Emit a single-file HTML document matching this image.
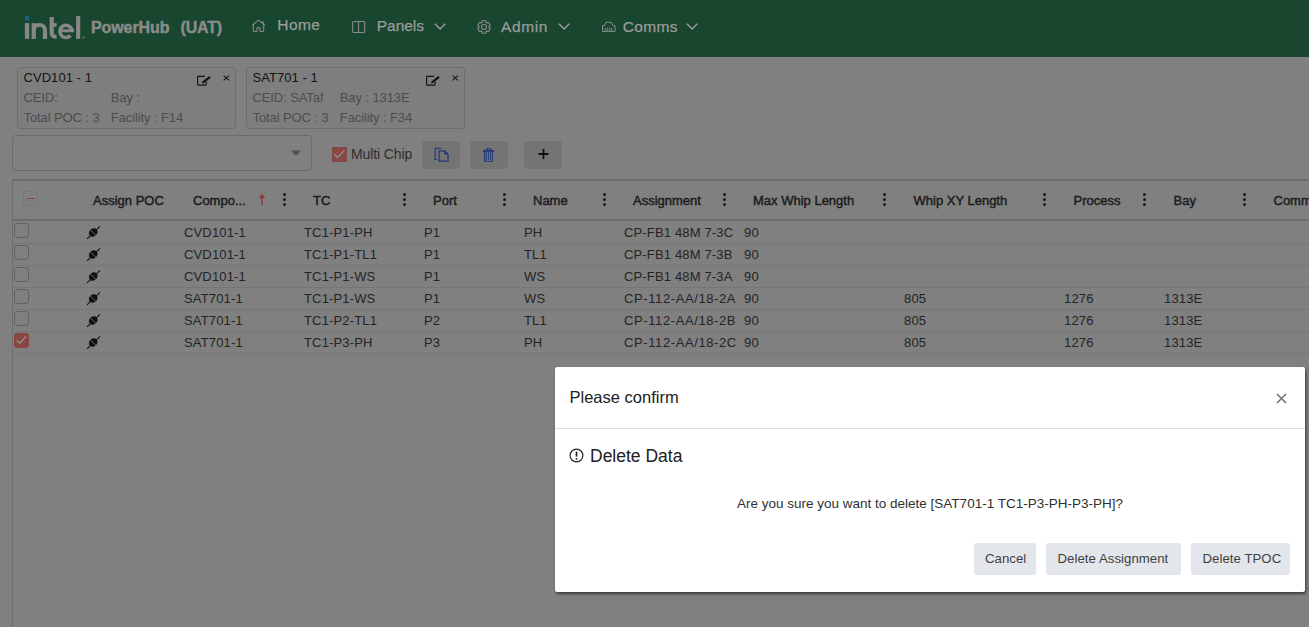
<!DOCTYPE html>
<html><head><meta charset="utf-8">
<style>
*{box-sizing:border-box;margin:0;padding:0}
html,body{width:1309px;height:627px;overflow:hidden;background:#808080;font-family:"Liberation Sans",sans-serif;position:relative}
.a{position:absolute;white-space:nowrap}
svg.a{overflow:visible}
</style></head><body>
<div style="position:absolute;left:0;top:0;width:1309px;height:57px;background:rgb(24,70,46)"></div>
<svg class="a" style="left:0;top:0" width="90" height="45" viewBox="0 0 90 45"><rect x="24.9" y="16.1" width="4.3" height="4.6" fill="#17607f"/><rect x="24.9" y="23.1" width="4.3" height="15.8" fill="#878787"/><path d="M33.75 38.9 V23.1" fill="none" stroke="#878787" stroke-width="4.3"/><path d="M33.75 31 C33.75 26.5 36.2 24.9 39.3 24.9 C43.2 24.9 45 27.3 45 31 V38.9" fill="none" stroke="#878787" stroke-width="3.8"/><path d="M45 31 V38.9" stroke="#878787" stroke-width="4.3"/><path d="M51.7 17 V32.5 C51.7 36 53 36.8 56.6 36.8" fill="none" stroke="#878787" stroke-width="4.2"/><rect x="51" y="23.1" width="5.6" height="3.7" fill="#878787"/><path d="M60.05 30.8 H73.9" stroke="#878787" stroke-width="3"/><path d="M72.05 31.5 A6.1 6.1 0 1 0 70.5 35.5" fill="none" stroke="#878787" stroke-width="3.6"/><rect x="76.1" y="16.1" width="4.1" height="22.8" fill="#878787"/><circle cx="83.6" cy="37.4" r="1.2" fill="#5f6f66"/></svg>
<div class="a" style="left:91px;top:20.36px;font-size:16px;line-height:16px;color:#8b8b8b;font-weight:bold;letter-spacing:-0.1px;-webkit-text-stroke:0.45px #8b8b8b;">PowerHub</div>
<div class="a" style="left:180.5px;top:20.36px;font-size:16px;line-height:16px;color:#8b8b8b;font-weight:bold;letter-spacing:-0.2px;-webkit-text-stroke:0.45px #8b8b8b;">(UAT)</div>
<div class="a" style="left:277.3px;top:17.48px;font-size:15.5px;line-height:15.5px;color:#9c9c9c;font-weight:normal;letter-spacing:0.4px;-webkit-text-stroke:0.25px #9c9c9c;">Home</div>
<div class="a" style="left:376.8px;top:18.48px;font-size:15.5px;line-height:15.5px;color:#9c9c9c;font-weight:normal;letter-spacing:-0.05px;-webkit-text-stroke:0.25px #9c9c9c;">Panels</div>
<div class="a" style="left:501px;top:18.68px;font-size:15.5px;line-height:15.5px;color:#9c9c9c;font-weight:normal;letter-spacing:0.6px;-webkit-text-stroke:0.25px #9c9c9c;">Admin</div>
<div class="a" style="left:622.8px;top:18.68px;font-size:15.5px;line-height:15.5px;color:#9c9c9c;font-weight:normal;letter-spacing:0.35px;-webkit-text-stroke:0.25px #9c9c9c;">Comms</div>
<svg class="a" style="left:251px;top:19px" width="15" height="14" viewBox="0 0 15 14"><path d="M1.5 6 L7.5 1.2 L13.5 6 M12.2 4.9 V2.6 M2.3 5.6 V11.2 Q2.3 12.4 3.5 12.4 H5.3 Q6 12.4 6 11.7 V8.7 H9 V11.7 Q9 12.4 9.7 12.4 H11.5 Q12.7 12.4 12.7 11.2 V5.6" fill="none" stroke="#8d8d8d" stroke-width="1.05" stroke-linejoin="round" stroke-linecap="round"/></svg>
<svg class="a" style="left:351px;top:20px" width="15" height="14" viewBox="0 0 15 14"><rect x="1.7" y="1.5" width="12" height="11" rx="1.1" fill="none" stroke="#8d8d8d" stroke-width="1.05"/><path d="M7.6 1.5 V12.5" stroke="#8d8d8d" stroke-width="1.05"/></svg>
<svg class="a" style="left:477px;top:20px" width="14" height="14" viewBox="0 0 13 13"><path d="M4.62 2.30 L4.73 0.77 L8.27 0.77 L8.38 2.30 L9.20 2.78 L10.58 2.10 L12.35 5.17 L11.08 6.02 L11.08 6.98 L12.35 7.83 L10.58 10.90 L9.20 10.22 L8.38 10.70 L8.27 12.23 L4.73 12.23 L4.62 10.70 L3.80 10.22 L2.42 10.90 L0.65 7.83 L1.92 6.98 L1.92 6.02 L0.65 5.17 L2.42 2.10 L3.80 2.78 Z" fill="none" stroke="#8d8d8d" stroke-width="1.0" stroke-linejoin="round"/><circle cx="6.5" cy="6.5" r="2.3" fill="none" stroke="#8d8d8d" stroke-width="1.0"/></svg>
<svg class="a" style="left:601px;top:21px" width="16" height="12" viewBox="0 0 16 12"><path d="M1.5 10.4 V4.6 H3.5 L5 1.3 H10.5 L12 4.6 H14 V10.4 Z" fill="none" stroke="#8d8d8d" stroke-width="1.0" stroke-linejoin="round"/><path d="M4.1 6.6 V10.2 M6.2 6.6 V10.2 M8.3 6.6 V10.2 M10.5 6.6 V10.2" stroke="#8d8d8d" stroke-width="0.9"/></svg>
<svg class="a" style="left:434px;top:22px" width="13" height="9" viewBox="0 0 13 9"><path d="M0.9 1.7 L6.1 7 L11.3 1.7" fill="none" stroke="#9a9a9a" stroke-width="1.5"/></svg>
<svg class="a" style="left:558px;top:22px" width="13" height="9" viewBox="0 0 13 9"><path d="M0.9 1.7 L6.1 7 L11.3 1.7" fill="none" stroke="#9a9a9a" stroke-width="1.5"/></svg>
<svg class="a" style="left:686px;top:22px" width="13" height="9" viewBox="0 0 13 9"><path d="M0.9 1.7 L6.1 7 L11.3 1.7" fill="none" stroke="#9a9a9a" stroke-width="1.5"/></svg>
<div class="a" style="left:17px;top:67px;width:219px;height:62px;border:1px solid #6e6e6e;border-radius:3px;background:#7e7e7e"></div>
<div class="a" style="left:23.5px;top:71.00px;font-size:13px;line-height:13px;color:#131313;font-weight:normal;letter-spacing:0.05px;">CVD101 - 1</div>
<div class="a" style="left:23.5px;top:91.00px;font-size:13px;line-height:13px;color:#4d4d4d;font-weight:normal;letter-spacing:-0.1px;">CEID:</div>
<div class="a" style="left:110.8px;top:91.00px;font-size:13px;line-height:13px;color:#4d4d4d;font-weight:normal;letter-spacing:-0.1px;">Bay :</div>
<div class="a" style="left:23.5px;top:111.00px;font-size:13px;line-height:13px;color:#4d4d4d;font-weight:normal;letter-spacing:-0.1px;">Total POC : 3</div>
<div class="a" style="left:110.8px;top:111.00px;font-size:13px;line-height:13px;color:#4d4d4d;font-weight:normal;letter-spacing:-0.1px;">Facility : F14</div>
<svg class="a" style="left:196px;top:75px" width="16" height="12" viewBox="0 0 16 12"><path d="M9 1.4 H2.1 Q1.6 1.4 1.6 1.9 V9.6 Q1.6 10.1 2.1 10.1 H9.7 Q10.2 10.1 10.2 9.6 V6.8" fill="none" stroke="#121212" stroke-width="1.1"/><path d="M5.9 8.4 L6.77 6.29 L13.31 1.04 L14.69 2.76 L8.15 8.01 Z" fill="#121212"/></svg>
<svg class="a" style="left:223px;top:74.5px" width="7" height="6" viewBox="0 0 7 6"><path d="M0.6 0.6 L6 5.4 M6 0.6 L0.6 5.4" stroke="#151515" stroke-width="1.05"/></svg>
<div class="a" style="left:246px;top:67px;width:219px;height:62px;border:1px solid #6e6e6e;border-radius:3px;background:#7e7e7e"></div>
<div class="a" style="left:252.5px;top:71.00px;font-size:13px;line-height:13px;color:#131313;font-weight:normal;letter-spacing:0.05px;">SAT701 - 1</div>
<div class="a" style="left:252.5px;top:91.00px;font-size:13px;line-height:13px;color:#4d4d4d;font-weight:normal;letter-spacing:-0.1px;">CEID: SATaf</div>
<div class="a" style="left:339.8px;top:91.00px;font-size:13px;line-height:13px;color:#4d4d4d;font-weight:normal;letter-spacing:-0.1px;">Bay : 1313E</div>
<div class="a" style="left:252.5px;top:111.00px;font-size:13px;line-height:13px;color:#4d4d4d;font-weight:normal;letter-spacing:-0.1px;">Total POC : 3</div>
<div class="a" style="left:339.8px;top:111.00px;font-size:13px;line-height:13px;color:#4d4d4d;font-weight:normal;letter-spacing:-0.1px;">Facility : F34</div>
<svg class="a" style="left:425px;top:75px" width="16" height="12" viewBox="0 0 16 12"><path d="M9 1.4 H2.1 Q1.6 1.4 1.6 1.9 V9.6 Q1.6 10.1 2.1 10.1 H9.7 Q10.2 10.1 10.2 9.6 V6.8" fill="none" stroke="#121212" stroke-width="1.1"/><path d="M5.9 8.4 L6.77 6.29 L13.31 1.04 L14.69 2.76 L8.15 8.01 Z" fill="#121212"/></svg>
<svg class="a" style="left:452px;top:74.5px" width="7" height="6" viewBox="0 0 7 6"><path d="M0.6 0.6 L6 5.4 M6 0.6 L0.6 5.4" stroke="#151515" stroke-width="1.05"/></svg>
<div class="a" style="left:12px;top:135px;width:300px;height:36px;border:1px solid #6a6a6a;border-radius:4px;background:#808080"></div>
<svg class="a" style="left:290px;top:149.8px" width="12" height="7" viewBox="0 0 12 7"><path d="M1 0.5 H11 L6 6 Z" fill="#505050"/></svg>
<div class="a" style="left:332px;top:147px;width:15px;height:15px;background:#8a4641;border:1px solid #7d4a46"></div>
<svg class="a" style="left:332px;top:147px" width="15" height="15" viewBox="0 0 15 15"><path d="M2.3 7.4 L5.6 10.4 L12.3 3.5" fill="none" stroke="#8c8c8c" stroke-width="1.5"/></svg>
<div class="a" style="left:351px;top:147.15px;font-size:14px;line-height:14px;color:#2e2e2e;font-weight:normal;letter-spacing:-0.1px;">Multi Chip</div>
<div class="a" style="left:422px;top:141px;width:38px;height:28px;border-radius:3px;background:#747474"></div>
<div class="a" style="left:470px;top:141px;width:38px;height:28px;border-radius:3px;background:#747474"></div>
<div class="a" style="left:524px;top:141px;width:38px;height:28px;border-radius:3px;background:#747474"></div>
<svg class="a" style="left:428px;top:143px" width="72" height="24" viewBox="0 0 72 24"><path d="M13.75 5.3 H7.1 V16.5 H9" fill="none" stroke="#1f3575" stroke-width="1.1"/><path d="M11.1 7.8 H16.5 L20 11.3 V18.1 H11.1 Z" fill="none" stroke="#1f3575" stroke-width="1.2" stroke-linejoin="miter"/><path d="M16.3 7.3 L20.5 11.5 H16.3 Z" fill="#1f3575"/><rect x="55" y="6.9" width="11" height="1.9" fill="#1f3575"/><path d="M58.8 7 V5.6 H62.6 V7" fill="none" stroke="#1f3575" stroke-width="1"/><path d="M56.6 8.8 V18.2 H64.4 V8.8" fill="none" stroke="#1f3575" stroke-width="1.1"/><path d="M58.4 9 V16.8 M60.5 9 V16.8 M62.5 9 V16.8" stroke="#1f3575" stroke-width="0.9"/></svg>
<svg class="a" style="left:538px;top:148px" width="11" height="12" viewBox="0 0 11 12"><path d="M0.5 6 H10.5 M5.5 1 V11" stroke="#111" stroke-width="1.8"/></svg>
<div class="a" style="left:12px;top:179.3px;width:1297px;height:1.8px;background:#6b6b6b"></div>
<div class="a" style="left:12px;top:179px;width:1px;height:448px;background:#6e6e6e"></div>
<div class="a" style="left:12px;top:219px;width:1297px;height:2px;background:#6c6c6c"></div>
<div class="a" style="left:23px;top:191px;width:15px;height:15px;border:1px solid #777;border-radius:3px"></div>
<div class="a" style="left:27px;top:197.5px;width:8px;height:1.5px;background:#8a4844"></div>
<div class="a" style="left:93px;top:194.00px;font-size:13px;line-height:13px;color:#1c1c1c;font-weight:normal;-webkit-text-stroke:0.45px #1c1c1c;">Assign POC</div>
<div class="a" style="left:193px;top:194.00px;font-size:13px;line-height:13px;color:#1c1c1c;font-weight:normal;-webkit-text-stroke:0.45px #1c1c1c;">Compo...</div>
<div class="a" style="left:313px;top:194.00px;font-size:13px;line-height:13px;color:#1c1c1c;font-weight:normal;-webkit-text-stroke:0.45px #1c1c1c;">TC</div>
<div class="a" style="left:433px;top:194.00px;font-size:13px;line-height:13px;color:#1c1c1c;font-weight:normal;-webkit-text-stroke:0.45px #1c1c1c;">Port</div>
<div class="a" style="left:533px;top:194.00px;font-size:13px;line-height:13px;color:#1c1c1c;font-weight:normal;-webkit-text-stroke:0.45px #1c1c1c;">Name</div>
<div class="a" style="left:633px;top:194.00px;font-size:13px;line-height:13px;color:#1c1c1c;font-weight:normal;-webkit-text-stroke:0.45px #1c1c1c;">Assignment</div>
<div class="a" style="left:753px;top:194.00px;font-size:13px;line-height:13px;color:#1c1c1c;font-weight:normal;-webkit-text-stroke:0.45px #1c1c1c;">Max Whip Length</div>
<div class="a" style="left:913.5px;top:194.00px;font-size:13px;line-height:13px;color:#1c1c1c;font-weight:normal;-webkit-text-stroke:0.45px #1c1c1c;">Whip XY Length</div>
<div class="a" style="left:1073.5px;top:194.00px;font-size:13px;line-height:13px;color:#1c1c1c;font-weight:normal;-webkit-text-stroke:0.45px #1c1c1c;">Process</div>
<div class="a" style="left:1173.5px;top:194.00px;font-size:13px;line-height:13px;color:#1c1c1c;font-weight:normal;-webkit-text-stroke:0.45px #1c1c1c;">Bay</div>
<div class="a" style="left:1273.5px;top:194.00px;font-size:13px;line-height:13px;color:#1c1c1c;font-weight:normal;-webkit-text-stroke:0.45px #1c1c1c;">Comm</div>
<svg class="a" style="left:250px;top:188px" width="20" height="20" viewBox="0 0 20 20"><path d="M8.7 10.1 L12 5.8 L15.3 10.1 Z" fill="#8f3b37"/><rect x="11.2" y="9.9" width="1.65" height="6.9" fill="#8f3b37"/></svg>
<div class="a" style="left:282.75px;top:192.6px;width:3.4px;height:3.4px;border-radius:50%;background:#1c1c1c"></div>
<div class="a" style="left:282.75px;top:197.7px;width:3.4px;height:3.4px;border-radius:50%;background:#1c1c1c"></div>
<div class="a" style="left:282.75px;top:202.79999999999998px;width:3.4px;height:3.4px;border-radius:50%;background:#1c1c1c"></div>
<div class="a" style="left:402.75px;top:192.6px;width:3.4px;height:3.4px;border-radius:50%;background:#1c1c1c"></div>
<div class="a" style="left:402.75px;top:197.7px;width:3.4px;height:3.4px;border-radius:50%;background:#1c1c1c"></div>
<div class="a" style="left:402.75px;top:202.79999999999998px;width:3.4px;height:3.4px;border-radius:50%;background:#1c1c1c"></div>
<div class="a" style="left:502.75px;top:192.6px;width:3.4px;height:3.4px;border-radius:50%;background:#1c1c1c"></div>
<div class="a" style="left:502.75px;top:197.7px;width:3.4px;height:3.4px;border-radius:50%;background:#1c1c1c"></div>
<div class="a" style="left:502.75px;top:202.79999999999998px;width:3.4px;height:3.4px;border-radius:50%;background:#1c1c1c"></div>
<div class="a" style="left:602.75px;top:192.6px;width:3.4px;height:3.4px;border-radius:50%;background:#1c1c1c"></div>
<div class="a" style="left:602.75px;top:197.7px;width:3.4px;height:3.4px;border-radius:50%;background:#1c1c1c"></div>
<div class="a" style="left:602.75px;top:202.79999999999998px;width:3.4px;height:3.4px;border-radius:50%;background:#1c1c1c"></div>
<div class="a" style="left:722.75px;top:192.6px;width:3.4px;height:3.4px;border-radius:50%;background:#1c1c1c"></div>
<div class="a" style="left:722.75px;top:197.7px;width:3.4px;height:3.4px;border-radius:50%;background:#1c1c1c"></div>
<div class="a" style="left:722.75px;top:202.79999999999998px;width:3.4px;height:3.4px;border-radius:50%;background:#1c1c1c"></div>
<div class="a" style="left:882.75px;top:192.6px;width:3.4px;height:3.4px;border-radius:50%;background:#1c1c1c"></div>
<div class="a" style="left:882.75px;top:197.7px;width:3.4px;height:3.4px;border-radius:50%;background:#1c1c1c"></div>
<div class="a" style="left:882.75px;top:202.79999999999998px;width:3.4px;height:3.4px;border-radius:50%;background:#1c1c1c"></div>
<div class="a" style="left:1042.75px;top:192.6px;width:3.4px;height:3.4px;border-radius:50%;background:#1c1c1c"></div>
<div class="a" style="left:1042.75px;top:197.7px;width:3.4px;height:3.4px;border-radius:50%;background:#1c1c1c"></div>
<div class="a" style="left:1042.75px;top:202.79999999999998px;width:3.4px;height:3.4px;border-radius:50%;background:#1c1c1c"></div>
<div class="a" style="left:1142.75px;top:192.6px;width:3.4px;height:3.4px;border-radius:50%;background:#1c1c1c"></div>
<div class="a" style="left:1142.75px;top:197.7px;width:3.4px;height:3.4px;border-radius:50%;background:#1c1c1c"></div>
<div class="a" style="left:1142.75px;top:202.79999999999998px;width:3.4px;height:3.4px;border-radius:50%;background:#1c1c1c"></div>
<div class="a" style="left:1242.75px;top:192.6px;width:3.4px;height:3.4px;border-radius:50%;background:#1c1c1c"></div>
<div class="a" style="left:1242.75px;top:197.7px;width:3.4px;height:3.4px;border-radius:50%;background:#1c1c1c"></div>
<div class="a" style="left:1242.75px;top:202.79999999999998px;width:3.4px;height:3.4px;border-radius:50%;background:#1c1c1c"></div>
<div class="a" style="left:13px;top:242.5px;width:1296px;height:1px;background:#767676"></div>
<div class="a" style="left:14px;top:223px;width:15px;height:15px;border:1px solid #626262;border-radius:3px"></div>
<svg class="a" style="left:86px;top:226px" width="15" height="14" viewBox="0 0 15 14"><path d="M1 12.8 L14 0.4" stroke="#111" stroke-width="1.1"/><ellipse cx="7.2" cy="6.5" rx="4.7" ry="3.9" transform="rotate(-45 7.2 6.5)" fill="#111"/><path d="M4.2 3.8 L10 9.4" stroke="#7f7f7f" stroke-width="0.8"/></svg>
<div class="a" style="left:184px;top:225.80px;font-size:13px;line-height:13px;color:#242424;font-weight:normal;letter-spacing:0.15px;">CVD101-1</div>
<div class="a" style="left:304px;top:225.80px;font-size:13px;line-height:13px;color:#242424;font-weight:normal;letter-spacing:0.15px;">TC1-P1-PH</div>
<div class="a" style="left:424px;top:225.80px;font-size:13px;line-height:13px;color:#242424;font-weight:normal;letter-spacing:0.15px;">P1</div>
<div class="a" style="left:524px;top:225.80px;font-size:13px;line-height:13px;color:#242424;font-weight:normal;letter-spacing:0.15px;">PH</div>
<div class="a" style="left:624px;top:225.80px;font-size:13px;line-height:13px;color:#242424;font-weight:normal;letter-spacing:0.15px;">CP-FB1 48M 7-3C</div>
<div class="a" style="left:744px;top:225.80px;font-size:13px;line-height:13px;color:#242424;font-weight:normal;letter-spacing:0.15px;">90</div>
<div class="a" style="left:13px;top:264.5px;width:1296px;height:1px;background:#767676"></div>
<div class="a" style="left:14px;top:245px;width:15px;height:15px;border:1px solid #626262;border-radius:3px"></div>
<svg class="a" style="left:86px;top:248px" width="15" height="14" viewBox="0 0 15 14"><path d="M1 12.8 L14 0.4" stroke="#111" stroke-width="1.1"/><ellipse cx="7.2" cy="6.5" rx="4.7" ry="3.9" transform="rotate(-45 7.2 6.5)" fill="#111"/><path d="M4.2 3.8 L10 9.4" stroke="#7f7f7f" stroke-width="0.8"/></svg>
<div class="a" style="left:184px;top:247.80px;font-size:13px;line-height:13px;color:#242424;font-weight:normal;letter-spacing:0.15px;">CVD101-1</div>
<div class="a" style="left:304px;top:247.80px;font-size:13px;line-height:13px;color:#242424;font-weight:normal;letter-spacing:0.15px;">TC1-P1-TL1</div>
<div class="a" style="left:424px;top:247.80px;font-size:13px;line-height:13px;color:#242424;font-weight:normal;letter-spacing:0.15px;">P1</div>
<div class="a" style="left:524px;top:247.80px;font-size:13px;line-height:13px;color:#242424;font-weight:normal;letter-spacing:0.15px;">TL1</div>
<div class="a" style="left:624px;top:247.80px;font-size:13px;line-height:13px;color:#242424;font-weight:normal;letter-spacing:0.15px;">CP-FB1 48M 7-3B</div>
<div class="a" style="left:744px;top:247.80px;font-size:13px;line-height:13px;color:#242424;font-weight:normal;letter-spacing:0.15px;">90</div>
<div class="a" style="left:13px;top:286.5px;width:1296px;height:1px;background:#767676"></div>
<div class="a" style="left:14px;top:267px;width:15px;height:15px;border:1px solid #626262;border-radius:3px"></div>
<svg class="a" style="left:86px;top:270px" width="15" height="14" viewBox="0 0 15 14"><path d="M1 12.8 L14 0.4" stroke="#111" stroke-width="1.1"/><ellipse cx="7.2" cy="6.5" rx="4.7" ry="3.9" transform="rotate(-45 7.2 6.5)" fill="#111"/><path d="M4.2 3.8 L10 9.4" stroke="#7f7f7f" stroke-width="0.8"/></svg>
<div class="a" style="left:184px;top:269.80px;font-size:13px;line-height:13px;color:#242424;font-weight:normal;letter-spacing:0.15px;">CVD101-1</div>
<div class="a" style="left:304px;top:269.80px;font-size:13px;line-height:13px;color:#242424;font-weight:normal;letter-spacing:0.15px;">TC1-P1-WS</div>
<div class="a" style="left:424px;top:269.80px;font-size:13px;line-height:13px;color:#242424;font-weight:normal;letter-spacing:0.15px;">P1</div>
<div class="a" style="left:524px;top:269.80px;font-size:13px;line-height:13px;color:#242424;font-weight:normal;letter-spacing:0.15px;">WS</div>
<div class="a" style="left:624px;top:269.80px;font-size:13px;line-height:13px;color:#242424;font-weight:normal;letter-spacing:0.15px;">CP-FB1 48M 7-3A</div>
<div class="a" style="left:744px;top:269.80px;font-size:13px;line-height:13px;color:#242424;font-weight:normal;letter-spacing:0.15px;">90</div>
<div class="a" style="left:13px;top:308.5px;width:1296px;height:1px;background:#767676"></div>
<div class="a" style="left:14px;top:289px;width:15px;height:15px;border:1px solid #626262;border-radius:3px"></div>
<svg class="a" style="left:86px;top:292px" width="15" height="14" viewBox="0 0 15 14"><path d="M1 12.8 L14 0.4" stroke="#111" stroke-width="1.1"/><ellipse cx="7.2" cy="6.5" rx="4.7" ry="3.9" transform="rotate(-45 7.2 6.5)" fill="#111"/><path d="M4.2 3.8 L10 9.4" stroke="#7f7f7f" stroke-width="0.8"/></svg>
<div class="a" style="left:184px;top:291.80px;font-size:13px;line-height:13px;color:#242424;font-weight:normal;letter-spacing:0.15px;">SAT701-1</div>
<div class="a" style="left:304px;top:291.80px;font-size:13px;line-height:13px;color:#242424;font-weight:normal;letter-spacing:0.15px;">TC1-P1-WS</div>
<div class="a" style="left:424px;top:291.80px;font-size:13px;line-height:13px;color:#242424;font-weight:normal;letter-spacing:0.15px;">P1</div>
<div class="a" style="left:524px;top:291.80px;font-size:13px;line-height:13px;color:#242424;font-weight:normal;letter-spacing:0.15px;">WS</div>
<div class="a" style="left:624px;top:291.80px;font-size:13px;line-height:13px;color:#242424;font-weight:normal;letter-spacing:0.6px;">CP-112-AA/18-2A</div>
<div class="a" style="left:744px;top:291.80px;font-size:13px;line-height:13px;color:#242424;font-weight:normal;letter-spacing:0.15px;">90</div>
<div class="a" style="left:904px;top:291.80px;font-size:13px;line-height:13px;color:#242424;font-weight:normal;letter-spacing:0.15px;">805</div>
<div class="a" style="left:1064px;top:291.80px;font-size:13px;line-height:13px;color:#242424;font-weight:normal;letter-spacing:0.15px;">1276</div>
<div class="a" style="left:1164px;top:291.80px;font-size:13px;line-height:13px;color:#242424;font-weight:normal;letter-spacing:0.15px;">1313E</div>
<div class="a" style="left:13px;top:330.5px;width:1296px;height:1px;background:#767676"></div>
<div class="a" style="left:14px;top:311px;width:15px;height:15px;border:1px solid #626262;border-radius:3px"></div>
<svg class="a" style="left:86px;top:314px" width="15" height="14" viewBox="0 0 15 14"><path d="M1 12.8 L14 0.4" stroke="#111" stroke-width="1.1"/><ellipse cx="7.2" cy="6.5" rx="4.7" ry="3.9" transform="rotate(-45 7.2 6.5)" fill="#111"/><path d="M4.2 3.8 L10 9.4" stroke="#7f7f7f" stroke-width="0.8"/></svg>
<div class="a" style="left:184px;top:313.80px;font-size:13px;line-height:13px;color:#242424;font-weight:normal;letter-spacing:0.15px;">SAT701-1</div>
<div class="a" style="left:304px;top:313.80px;font-size:13px;line-height:13px;color:#242424;font-weight:normal;letter-spacing:0.15px;">TC1-P2-TL1</div>
<div class="a" style="left:424px;top:313.80px;font-size:13px;line-height:13px;color:#242424;font-weight:normal;letter-spacing:0.15px;">P2</div>
<div class="a" style="left:524px;top:313.80px;font-size:13px;line-height:13px;color:#242424;font-weight:normal;letter-spacing:0.15px;">TL1</div>
<div class="a" style="left:624px;top:313.80px;font-size:13px;line-height:13px;color:#242424;font-weight:normal;letter-spacing:0.6px;">CP-112-AA/18-2B</div>
<div class="a" style="left:744px;top:313.80px;font-size:13px;line-height:13px;color:#242424;font-weight:normal;letter-spacing:0.15px;">90</div>
<div class="a" style="left:904px;top:313.80px;font-size:13px;line-height:13px;color:#242424;font-weight:normal;letter-spacing:0.15px;">805</div>
<div class="a" style="left:1064px;top:313.80px;font-size:13px;line-height:13px;color:#242424;font-weight:normal;letter-spacing:0.15px;">1276</div>
<div class="a" style="left:1164px;top:313.80px;font-size:13px;line-height:13px;color:#242424;font-weight:normal;letter-spacing:0.15px;">1313E</div>
<div class="a" style="left:13px;top:352.5px;width:1296px;height:1px;background:#767676"></div>
<div class="a" style="left:14px;top:333px;width:15px;height:15px;border-radius:3px;background:#8a4641"></div>
<svg class="a" style="left:14px;top:333px" width="15" height="15" viewBox="0 0 15 15"><path d="M2.6 7.3 L5.7 10.1 L12 3.4" fill="none" stroke="#8c8c8c" stroke-width="1.5"/></svg>
<svg class="a" style="left:86px;top:336px" width="15" height="14" viewBox="0 0 15 14"><path d="M1 12.8 L14 0.4" stroke="#111" stroke-width="1.1"/><ellipse cx="7.2" cy="6.5" rx="4.7" ry="3.9" transform="rotate(-45 7.2 6.5)" fill="#111"/><path d="M4.2 3.8 L10 9.4" stroke="#7f7f7f" stroke-width="0.8"/></svg>
<div class="a" style="left:184px;top:335.80px;font-size:13px;line-height:13px;color:#242424;font-weight:normal;letter-spacing:0.15px;">SAT701-1</div>
<div class="a" style="left:304px;top:335.80px;font-size:13px;line-height:13px;color:#242424;font-weight:normal;letter-spacing:0.15px;">TC1-P3-PH</div>
<div class="a" style="left:424px;top:335.80px;font-size:13px;line-height:13px;color:#242424;font-weight:normal;letter-spacing:0.15px;">P3</div>
<div class="a" style="left:524px;top:335.80px;font-size:13px;line-height:13px;color:#242424;font-weight:normal;letter-spacing:0.15px;">PH</div>
<div class="a" style="left:624px;top:335.80px;font-size:13px;line-height:13px;color:#242424;font-weight:normal;letter-spacing:0.6px;">CP-112-AA/18-2C</div>
<div class="a" style="left:744px;top:335.80px;font-size:13px;line-height:13px;color:#242424;font-weight:normal;letter-spacing:0.15px;">90</div>
<div class="a" style="left:904px;top:335.80px;font-size:13px;line-height:13px;color:#242424;font-weight:normal;letter-spacing:0.15px;">805</div>
<div class="a" style="left:1064px;top:335.80px;font-size:13px;line-height:13px;color:#242424;font-weight:normal;letter-spacing:0.15px;">1276</div>
<div class="a" style="left:1164px;top:335.80px;font-size:13px;line-height:13px;color:#242424;font-weight:normal;letter-spacing:0.15px;">1313E</div>
<div class="a" style="left:555px;top:367px;width:750px;height:225px;background:#fff;border-radius:2px;box-shadow:1px 2px 3px rgba(0,0,0,.55)"></div>
<div class="a" style="left:569.5px;top:388.83px;font-size:16.5px;line-height:16.5px;color:#212121;font-weight:normal;">Please confirm</div>
<svg class="a" style="left:1276px;top:393px" width="11" height="11" viewBox="0 0 11 11"><path d="M1 1 L10 10 M10 1 L1 10" stroke="#747474" stroke-width="1.6"/></svg>
<div class="a" style="left:555px;top:428px;width:750px;height:1px;background:#dedede"></div>
<svg class="a" style="left:569px;top:448px" width="15" height="15" viewBox="0 0 15 15"><circle cx="7.5" cy="7.5" r="6.4" fill="none" stroke="#222" stroke-width="1.15"/><path d="M7.5 3.6 V8.6" stroke="#222" stroke-width="1.7"/><circle cx="7.5" cy="10.9" r="0.95" fill="#222"/></svg>
<div class="a" style="left:590px;top:447.99px;font-size:17.5px;line-height:17.5px;color:#212121;font-weight:normal;">Delete Data</div>
<div class="a" style="left:737px;top:496.77px;font-size:13.5px;line-height:13.5px;color:#303030;font-weight:normal;">Are you sure you want to delete [SAT701-1 TC1-P3-PH-P3-PH]?</div>
<div class="a" style="left:974px;top:543px;width:62px;height:32px;border-radius:3px;background:#e3e6ea"></div>
<div class="a" style="left:985px;top:552.13px;font-size:13.2px;line-height:13.2px;color:#3f3f3f;font-weight:normal;letter-spacing:0.05px;">Cancel</div>
<div class="a" style="left:1046px;top:543px;width:135px;height:32px;border-radius:3px;background:#e3e6ea"></div>
<div class="a" style="left:1057.5px;top:552.13px;font-size:13.2px;line-height:13.2px;color:#3f3f3f;font-weight:normal;letter-spacing:0.05px;">Delete Assignment</div>
<div class="a" style="left:1191px;top:543px;width:99px;height:32px;border-radius:3px;background:#e3e6ea"></div>
<div class="a" style="left:1202.5px;top:552.13px;font-size:13.2px;line-height:13.2px;color:#3f3f3f;font-weight:normal;letter-spacing:0.05px;">Delete TPOC</div>
</body></html>
